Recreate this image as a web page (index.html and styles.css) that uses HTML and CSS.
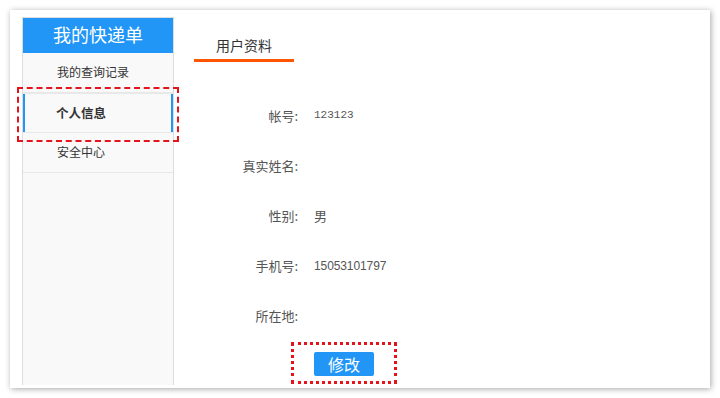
FILE: index.html
```html
<!DOCTYPE html>
<html lang="zh-CN">
<head>
  <meta charset="UTF-8" />
  <title>我的快递单 - 个人信息</title>
  <link rel="stylesheet" href="styles.css">
</head>
<body>
  <div class="card">
    <div class="sidebar">
      <div class="menu-title">我的快递单</div>
      <div class="menu-item">我的查询记录</div>
      <div class="menu-item active">个人信息</div>
      <div class="menu-item">安全中心</div>
    </div>

    <div class="main">
      <div class="tab">用户资料</div>

      <div class="form">
        <div class="row">
          <span class="label">帐号:</span>
          <span class="value mono">123123</span>
        </div>
        <div class="row">
          <span class="label">真实姓名:</span>
          <span class="value"></span>
        </div>
        <div class="row">
          <span class="label">性别:</span>
          <span class="value">男</span>
        </div>
        <div class="row">
          <span class="label">手机号:</span>
          <span class="value num">15053101797</span>
        </div>
        <div class="row">
          <span class="label">所在地:</span>
          <span class="value"></span>
        </div>
        <div class="actions">
          <button class="btn">修改</button>
        </div>
      </div>
    </div>
  </div>
</body>
</html>
```

FILE: styles.css
```css
:root {
  --blue: #2196f6;
  --orange: #ff5500;
  --mark: #e3141b;
  --text: #333;
  --label: #555;
}

body {
  margin: 0;
  padding: 10px;
  background: #fff;
  font-family: "Noto Sans CJK SC", "Noto Sans", sans-serif;
  color: var(--text);
}

.card {
  width: 700px;
  height: 378px;
  box-sizing: border-box;
  padding: 7px 12px 3px;
  display: flex;
  background: #fff;
  box-shadow: 1px 1px 6px rgba(0, 0, 0, 0.35);
}

/* left menu */
.sidebar {
  width: 152px;
  box-sizing: border-box;
  border: 1px solid #ddd;
  border-bottom: none;
  background: #f9f9f9;
}

.menu-title {
  height: 35px;
  line-height: 33px;
  background: var(--blue);
  color: #fff;
  font-size: 18px;
  text-align: center;
}

.menu-item {
  position: relative;
  height: 39px;
  line-height: 37px;
  padding-left: 34px;
  font-size: 12px;
  color: var(--text);
  border-bottom: 1px solid #e8e8e8;
}

.menu-item.active {
  padding-left: 33px;
  font-weight: bold;
  font-size: 12.5px;
  box-shadow: inset 2px 0 var(--blue), inset -2px 0 var(--blue);
  border-top: 1px solid #e8e8e8;
  height: 38px;
  line-height: 38px;
}

.menu-item.active::after {
  content: "";
  position: absolute;
  top: -7px;
  bottom: -10px;
  left: -6px;
  right: -6px;
  border: 2px dashed var(--mark);
}

/* right panel */
.main {
  flex: 1;
  padding-left: 20px;
}

.tab {
  width: 100px;
  margin-top: 14px;
  line-height: 28px;
  font-size: 14px;
  text-align: center;
  color: var(--text);
  border-bottom: 3px solid var(--orange);
}

.form {
  margin-top: 28px;
}

.row {
  display: flex;
  align-items: center;
  height: 50px;
}

.label {
  width: 104px;
  text-align: right;
  font-size: 13px;
  color: var(--label);
}

.value {
  margin-left: 16px;
  font-size: 13px;
  color: var(--label);
}

.value.mono {
  font-family: "Liberation Mono", monospace;
  font-size: 11px;
}

.value.num {
  font-family: "Liberation Sans", sans-serif;
  font-size: 12px;
  letter-spacing: -0.1px;
  padding-top: 2px;
}

.actions {
  margin-top: 12px;
  padding-left: 120px;
}

.btn {
  position: relative;
  width: 60px;
  height: 24px;
  padding: 0;
  border: none;
  border-radius: 2px;
  background: var(--blue);
  color: #fff;
  font-family: inherit;
  font-size: 16px;
  line-height: 24px;
  cursor: pointer;
}

.btn::after {
  content: "";
  position: absolute;
  top: -10px;
  bottom: -8px;
  left: -23px;
  right: -23px;
  border: 3px dotted var(--mark);
}
```
